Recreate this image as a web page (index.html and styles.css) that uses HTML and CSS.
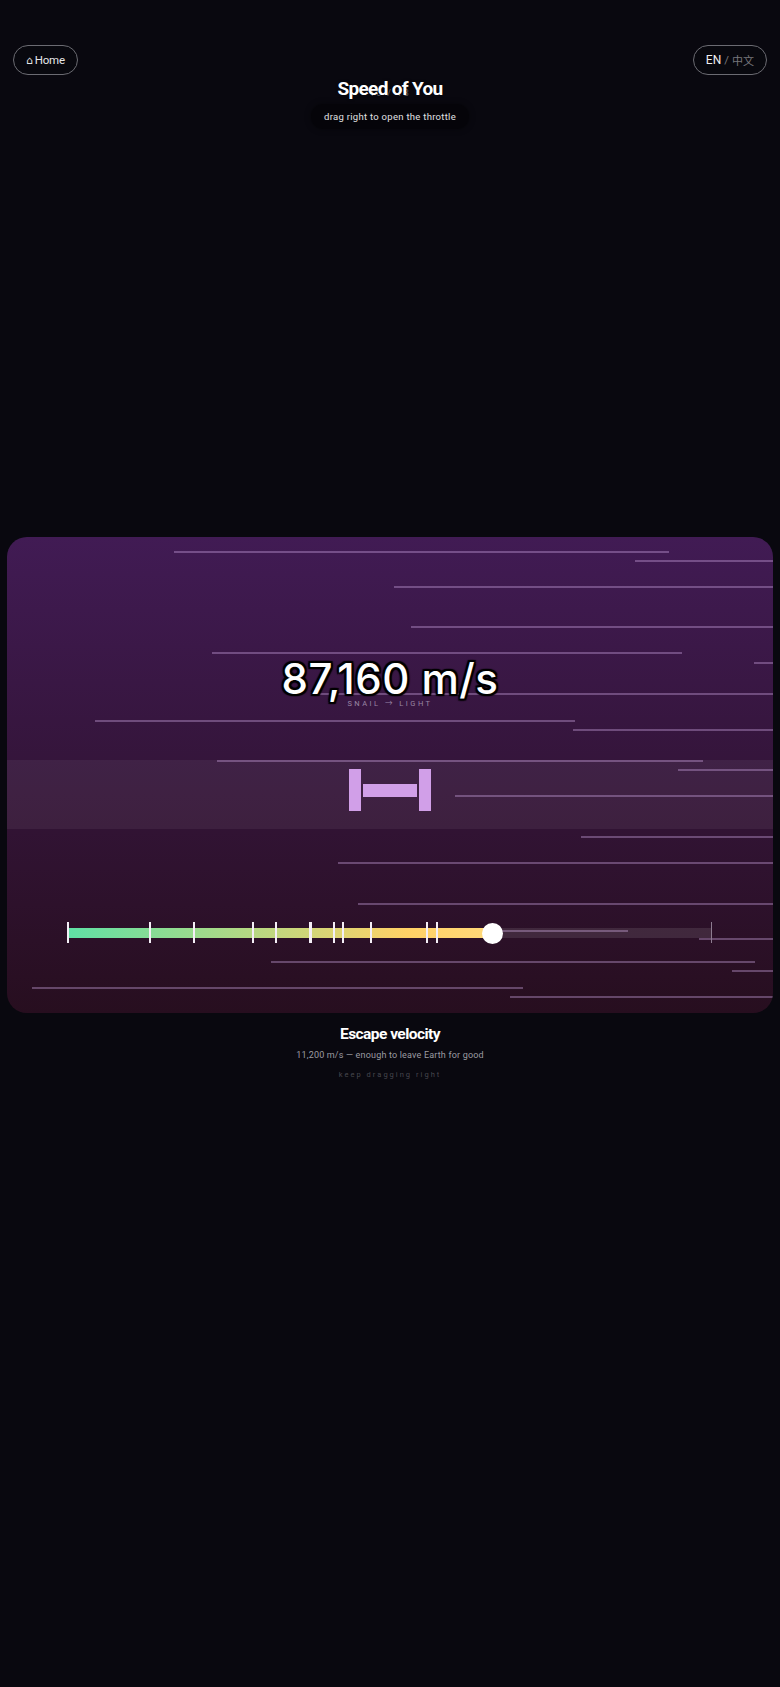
FILE: index.html
```html
<!DOCTYPE html>
<html lang="en">
<head>
  <meta charset="UTF-8" />
  <meta name="viewport" content="width=device-width, initial-scale=1.0"/>
  <title>Speed of You</title>
  <link rel="stylesheet" href="styles.css">
</head>
<body>
  <header class="topbar">
    <a class="pill home-link" href="#"><span class="home-icon">⌂</span> Home</a>
    <div class="pill lang-switch"><b>EN</b> <span class="lang-sep">/</span> <span class="lang-off">中文</span></div>
  </header>

  <div class="intro">
    <div class="counter">10 / 13</div>
    <h1 class="title">Speed of You</h1>
    <p class="hint">drag right to open the throttle</p>
  </div>

  <section class="stage">
    <div class="road"></div>
    <!-- streaks -->
    <svg class="streaks" viewBox="0 0 766 476" width="766" height="476">
      <g class="streak-lines">
        <rect x="167" y="14" width="495" height="2"/>
        <rect x="628" y="23" width="138" height="2"/>
        <rect x="387" y="49" width="379" height="2"/>
        <rect x="404" y="89" width="362" height="2"/>
        <rect x="205" y="115" width="470" height="2"/>
        <rect x="747" y="125" width="19" height="2"/>
        <rect x="311" y="156" width="455" height="2"/>
        <rect x="88" y="183" width="480" height="2"/>
        <rect x="566" y="192" width="200" height="2"/>
        <rect x="210" y="223" width="486" height="2"/>
        <rect x="671" y="232" width="95" height="2"/>
        <rect x="448" y="258" width="318" height="2"/>
        <rect x="574" y="299" width="192" height="2"/>
        <rect x="331" y="325" width="435" height="2"/>
        <rect x="351" y="366" width="415" height="2"/>
        <rect x="440" y="393" width="181" height="2"/>
        <rect x="692" y="401" width="74" height="2"/>
        <rect x="264" y="424" width="484" height="2"/>
        <rect x="725" y="433" width="41" height="2"/>
        <rect x="25" y="450" width="491" height="2"/>
        <rect x="503" y="459" width="263" height="2"/>
      </g>
    </svg>

    <div class="readout">
      <div class="speed">87,160 m/s</div>
      <div class="scale-label">SNAIL → LIGHT</div>
    </div>

    <div class="racer">
      <span class="racer-end"></span>
      <span class="racer-bar"></span>
      <span class="racer-end"></span>
    </div>

    <div class="slider">
      <div class="track">
        <div class="fill"></div>
        <i class="tick tick-end" style="left: 644px"></i>
        <i class="tick" style="left: 0"></i>
        <i class="tick" style="left: 82px"></i>
        <i class="tick" style="left: 126px"></i>
        <i class="tick" style="left: 185px"></i>
        <i class="tick" style="left: 208px"></i>
        <i class="tick tick-wide" style="left: 242px"></i>
        <i class="tick" style="left: 266px"></i>
        <i class="tick" style="left: 275px"></i>
        <i class="tick" style="left: 303px"></i>
        <i class="tick" style="left: 359px"></i>
        <i class="tick" style="left: 369px"></i>
        <div class="thumb"></div>
      </div>
    </div>
  </section>

  <div class="caption">
    <h2 class="caption-title">Escape velocity</h2>
    <p class="caption-text">11,200 m/s — enough to leave Earth for good</p>
    <p class="caption-more">keep dragging right</p>
  </div>
</body>
</html>
```

FILE: styles.css
```css
* {
  box-sizing: border-box;
}
body {
  margin: 0;
  min-height: 100vh;
  background: #09080f;
  color: #fff;
  font-family: Roboto, 'Noto Sans CJK SC', Arial, sans-serif;
  overflow-x: hidden;
}
/* --- top bar --- */
.topbar {
  display: flex;
  justify-content: space-between;
  padding: 45px 13px 0;
  height: 74px;
}
.pill {
  display: flex;
  align-items: center;
  gap: 3px;
  height: 30px;
  padding: 0 12px;
  border: 1px solid #6b6b72;
  border-radius: 15px;
  background: #08080e;
  color: #e6e6e8;
  font-size: 11.5px;
  text-decoration: none;
}
.home-link {
  letter-spacing: -0.02em;
  gap: 2px;
}
.home-icon {
  font-family: 'DejaVu Sans', sans-serif;
  font-size: 11px;
}
.lang-switch b {
  font-weight: 400;
  font-size: 12px;
  color: #f0f0f0;
}
.lang-sep,
.lang-off {
  color: #77777c;
}
.lang-off {
  font-size: 11px;
}
/* --- heading --- */
.intro {
  position: relative;
  height: 463px;
  padding-top: 3px;
  text-align: center;
}
.counter {
  position: absolute;
  top: 14px;
  left: 0;
  right: 0;
  font-size: 9px;
  letter-spacing: 0.2em;
  color: #66666c;
}
.title {
  position: relative;
  margin: 0;
  font-size: 19px;
  line-height: 24px;
  font-weight: 700;
  letter-spacing: -0.035em;
  text-shadow: 0 0 3px rgba(0, 0, 0, 0.5);
}
.hint {
  display: inline-block;
  position: relative;
  margin: 3px 0 0;
  padding: 5px 13px;
  border-radius: 12px;
  background: rgba(0, 0, 0, 0.4);
  box-shadow: 0 0 6px rgba(0, 0, 0, 0.4);
  color: #e0e0e2;
  font-size: 9.5px;
  line-height: 15px;
  letter-spacing: 0.03em;
}
/* --- stage --- */
.stage {
  position: relative;
  width: 766px;
  height: 476px;
  margin: 0 7px;
  border-radius: 20px;
  overflow: hidden;
  background: linear-gradient(180deg, #411b54 0%, #270e1f 100%);
}
.road {
  position: absolute;
  top: 223px;
  left: 0;
  right: 0;
  height: 69px;
  background: rgba(255, 255, 255, 0.06);
}
.streaks {
  position: absolute;
  top: 0;
  left: 0;
}
.streak-lines rect {
  fill: #d4ace8;
  fill-opacity: 0.36;
}
.readout {
  position: absolute;
  top: 117px;
  left: 0;
  right: 0;
  text-align: center;
}
.speed {
  font-family: Inter, 'Liberation Sans', sans-serif;
  font-size: 42px;
  line-height: 50px;
  font-weight: 500;
  letter-spacing: 0.012em;
  text-shadow: 2px 0 1px #000, -2px 0 1px #000, 0 2px 1px #000, 0 -2px 1px #000,
    2px 2px 1px #000, -2px 2px 1px #000, 2px -2px 1px #000, -2px -2px 1px #000;
}
.scale-label {
  margin-top: -6px;
  font-size: 7.5px;
  line-height: 12px;
  letter-spacing: 0.33em;
  color: #9a86a5;
}
.racer {
  position: absolute;
  top: 232px;
  left: 0;
  right: 0;
  display: flex;
  justify-content: center;
  align-items: center;
  gap: 2px;
}
.racer-end {
  width: 12px;
  height: 42px;
  background: #d19fe8;
}
.racer-bar {
  width: 54px;
  height: 13px;
  background: #d19fe8;
}
/* --- slider --- */
.slider {
  position: absolute;
  top: 391px;
  left: 61px;
  width: 644px;
}
.track {
  position: relative;
  height: 10px;
  background: rgba(255, 255, 255, 0.1);
}
.fill {
  width: 424px;
  height: 100%;
  background: linear-gradient(90deg, #5fe0a5 0%, #ffd166 80%, #ffd97a 100%);
}
.tick {
  position: absolute;
  top: -6px;
  width: 2px;
  height: 21px;
  margin-left: -1px;
  background: #f4eef6;
}
.tick-wide {
  width: 3px;
}
.tick-end {
  width: 1px;
  background: #8d7c90;
}
.thumb {
  position: absolute;
  top: -5px;
  left: 414px;
  width: 21px;
  height: 21px;
  border-radius: 50%;
  background: #fff;
}
/* --- caption --- */
.caption {
  padding-top: 10px;
  text-align: center;
}
.caption-title {
  margin: 0;
  font-size: 15.5px;
  line-height: 22px;
  font-weight: 700;
  letter-spacing: -0.035em;
}
.caption-text {
  margin: 3px 0 0;
  font-size: 9px;
  line-height: 14px;
  letter-spacing: 0.02em;
  color: #9c9ca2;
}
.caption-more {
  margin: 7px 0 0;
  font-size: 7.5px;
  line-height: 12px;
  letter-spacing: 0.27em;
  color: #47474e;
}
```
